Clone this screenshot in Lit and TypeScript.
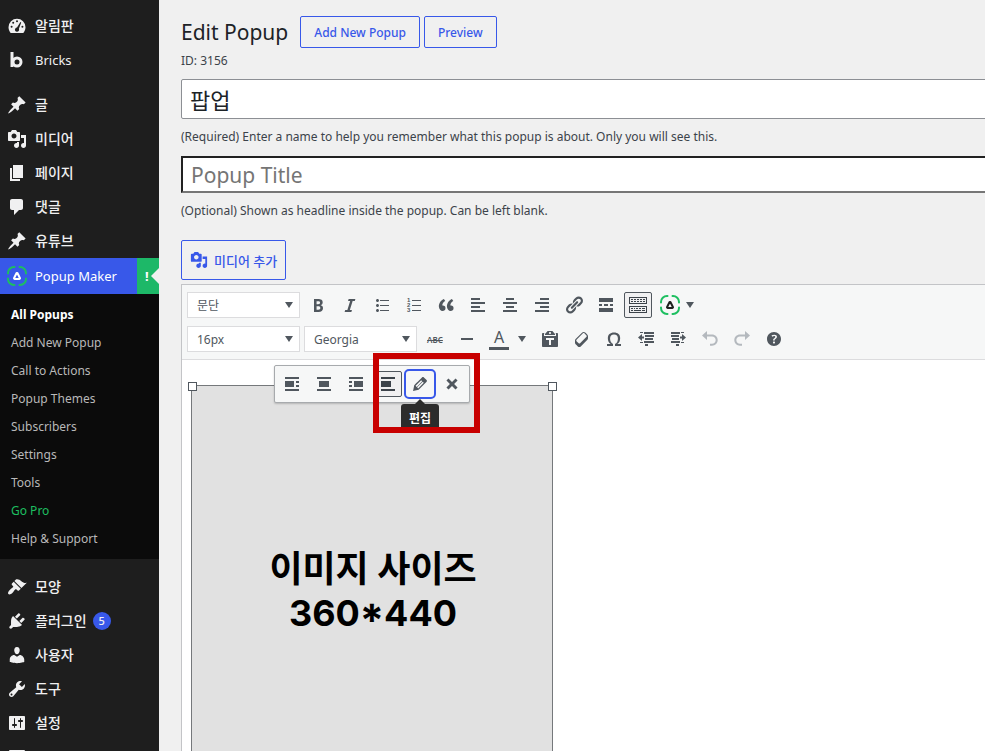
import { LitElement, html, css, svg, nothing } from "lit";
import { customElement, property } from "lit/decorators.js";
import { classMap } from "lit/directives/class-map.js";

const paths: Record<string, string> = {
  dashboard:
    "M3.76 17h12.48C17.4 15.6 18.5 13.500 18.500 11.200a8.500 8.500 0 1 0-17 0c0 2.300 1.100 4.400 2.260 5.800zM10 4.200a1 1 0 1 1 0 2 1 1 0 0 1 0-2zM6.200 5.800a1 1 0 1 1 0 2 1 1 0 0 1 0-2zM4.600 9.800a1 1 0 1 1 0 2 1 1 0 0 1 0-2zM15.400 9.800a1 1 0 1 1 0 2 1 1 0 0 1 0-2zM13.400 6l.8.500-2.300 6.200c.7 1.500-.3 3-1.900 3s-2.600-1.700-1.800-3c.4-.7 1.100-1 1.800-1.100z",
  pin: "M10.44 3.02l1.82-1.82 6.36 6.35-1.83 1.82c-1.05-.68-2.48-.57-3.41.36l-.75.75c-.92.93-1.04 2.35-.35 3.41l-1.83 1.82-2.41-2.41-2.8 2.79c-.42.42-3.38 2.71-3.8 2.29s1.86-3.39 2.28-3.81l2.79-2.79L4.1 9.36l1.83-1.82c1.05.69 2.48.57 3.4-.36l.75-.75c.93-.92 1.05-2.35.36-3.41z",
  media:
    "M13 11V4c0-.55-.45-1-1-1h-1.67L9 1H5L3.67 3H2c-.55 0-1 .45-1 1v7c0 .55.45 1 1 1h10c.55 0 1-.45 1-1zM7 4.5c1.38 0 2.5 1.12 2.5 2.5S8.38 9.5 7 9.5 4.5 8.38 4.5 7 5.62 4.5 7 4.5zM14 6h5v10.5c0 1.38-1.12 2.5-2.5 2.5S14 17.88 14 16.5s1.12-2.5 2.5-2.5c.17 0 .34.02.5.05V9h-3V6zm-4 8.05V13h2v3.5c0 1.38-1.12 2.5-2.5 2.5S7 17.88 7 16.5 8.12 14 9.5 14c.17 0 .34.02.5.05z",
  page: "M6 15V2h10v13H6zm-1 1h8v2H3V5h2v11z",
  comments: "M5 2h9c1.1 0 2 .9 2 2v7c0 1.1-.9 2-2 2h-2l-5 5v-5H5c-1.1 0-2-.9-2-2V4c0-1.1.9-2 2-2z",
  appearance:
    "M14.48 11.06L7.41 3.99l1.5-1.5c.5-.56 2.3-.47 3.51.32 1.21.8 1.43 1.28 2.91 2.1 1.18.64 2.45 1.26 4.45.85zm-.71.71L6.7 4.7 4.93 6.47c-.39.39-.39 1.02 0 1.41l1.06 1.06c.39.39.39 1.03 0 1.42-.6.6-1.43 1.11-2.21 1.69-.35.26-.7.53-1.01.84C1.43 14.23.4 16.08 1.4 17.07c.99 1 2.84-.03 4.18-1.36.31-.31.58-.66.85-1.02.57-.78 1.08-1.61 1.69-2.21.39-.39 1.02-.39 1.41 0l1.06 1.06c.39.39 1.02.39 1.41 0z",
  plugins:
    "M13.11 4.36L9.87 7.6 8 5.73l3.24-3.24c.35-.34 1.05-.2 1.56.32.52.51.66 1.21.31 1.55zm-8 1.77l.91-1.12 9.01 9.01-1.19.84c-.71.71-2.63 1.16-3.82 1.16H6.14L4.9 17.26c-.59.59-1.54.59-2.12 0-.59-.58-.59-1.53 0-2.12l1.24-1.24v-3.88c0-1.13.4-3.19 1.09-3.89zm7.26 3.97l3.24-3.24c.34-.35 1.04-.21 1.55.31.52.51.66 1.21.31 1.55l-3.24 3.25z",
  users:
    "M10 9.25c-2.27 0-2.73-3.44-2.73-3.44C7 4.02 7.82 2 9.97 2c2.16 0 2.98 2.02 2.71 3.81 0 0-.41 3.44-2.68 3.44zm0 2.57L12.72 10c2.39 0 4.52 2.33 4.52 4.53v2.49s-3.65 1.13-7.24 1.13c-3.65 0-7.24-1.13-7.24-1.13v-2.49c0-2.25 1.94-4.48 4.47-4.48z",
  tools:
    "M16.68 9.77c-1.34 1.34-3.3 1.67-4.95.99l-5.41 6.52c-.99.99-2.59.99-3.58 0s-.99-2.59 0-3.57l6.52-5.42c-.68-1.65-.35-3.61.99-4.95 1.28-1.28 3.12-1.62 4.72-1.06l-2.89 2.89 2.82 2.82 2.86-2.87c.53 1.58.18 3.39-1.08 4.65zM3.81 16.21c.4.39 1.04.39 1.43 0 .4-.4.4-1.04 0-1.43-.39-.4-1.03-.4-1.43 0-.39.39-.39 1.03 0 1.43z",
  settings:
    "M18 16V4c0-.55-.45-1-1-1H3c-.55 0-1 .45-1 1v12c0 .55.45 1 1 1h14c.55 0 1-.45 1-1zM8 11h1c.55 0 1 .45 1 1s-.45 1-1 1H8v1.5c0 .28-.22.5-.5.5s-.5-.22-.5-.5V13H6c-.55 0-1-.45-1-1s.45-1 1-1h1V5.5c0-.28.22-.5.5-.5s.5.22.5.5V11zm5-2h-1c-.55 0-1-.45-1-1s.45-1 1-1h1V5.5c0-.28.22-.5.5-.5s.5.22.5.5V7h1c.55 0 1 .45 1 1s-.45 1-1 1h-1v5.5c0 .28-.22.5-.5.5s-.5-.22-.5-.5V9z",
  more: "M3 3h14a1 1 0 0 1 1 1v13H2V4a1 1 0 0 1 1-1z",
  bold: "M6 4v13h4.54c1.37 0 2.46-.33 3.26-1 .8-.66 1.2-1.58 1.2-2.77 0-.84-.17-1.51-.51-2.01s-.9-.85-1.67-1.03v-.09c.57-.1 1.02-.4 1.36-.9s.51-1.13.51-1.91c0-1.14-.39-1.98-1.17-2.5C12.75 4.26 11.5 4 9.78 4H6zm2.57 5.15V6.26h1.36c.73 0 1.27.11 1.61.32.34.22.51.58.51 1.07 0 .54-.16.92-.47 1.15s-.82.35-1.51.35h-1.5zm0 2.19h1.6c1.44 0 2.16.53 2.16 1.61 0 .6-.17 1.05-.51 1.34s-.86.43-1.57.43H8.57v-3.38z",
  italic: "M14.78 6h-2.13l-2.8 9h2.12l-.62 2H4.6l.62-2h2.14l2.8-9H8.03l.62-2h6.75z",
  ul: "M5.5 7C4.67 7 4 6.33 4 5.5 4 4.68 4.67 4 5.5 4 6.32 4 7 4.68 7 5.5 7 6.33 6.32 7 5.5 7zM8 5h9v1H8V5zm-2.5 7c-.83 0-1.5-.67-1.5-1.5C4 9.68 4.67 9 5.5 9c.82 0 1.5.68 1.5 1.5 0 .83-.68 1.5-1.5 1.5zM8 10h9v1H8v-1zm-2.5 7c-.83 0-1.5-.67-1.5-1.5 0-.82.67-1.5 1.5-1.5.82 0 1.5.68 1.5 1.5 0 .83-.68 1.5-1.5 1.5zM8 15h9v1H8v-1z",
  quote:
    "M9.49 13.22c0-.74-.2-1.38-.61-1.9-.62-.78-1.83-.88-2.53-.72-.29-1.65 1.11-3.75 2.92-4.65L7.88 4c-2.73 1.3-5.42 4.28-4.96 8.05C3.21 14.43 4.59 16 6.54 16c.85 0 1.56-.25 2.12-.75s.83-1.18.83-2.03zm8.05 0c0-.74-.2-1.38-.61-1.9-.63-.78-1.83-.88-2.53-.72-.29-1.65 1.11-3.75 2.92-4.65L15.93 4c-2.73 1.3-5.41 4.28-4.95 8.05.28 2.38 1.66 3.95 3.61 3.95.85 0 1.56-.25 2.12-.75s.83-1.18.83-2.03z",
  alignleft: "M12 5V3H3v2h9zm5 4V7H3v2h14zm-5 4v-2H3v2h9zm5 4v-2H3v2h14z",
  aligncenter: "M14 5V3H6v2h8zm3 4V7H3v2h14zm-3 4v-2H6v2h8zm3 4v-2H3v2h14z",
  alignright: "M17 5V3H8v2h9zm0 4V7H3v2h14zm0 4v-2H8v2h9zm0 4v-2H3v2h14z",
  link: "M17.74 2.76c1.68 1.69 1.68 4.41 0 6.1l-1.53 1.52c-1.12 1.12-2.7 1.47-4.14 1.09l2.62-2.61.76-.77.76-.76c.84-.84.84-2.2 0-3.04-.84-.85-2.2-.85-3.04 0l-.77.76-3.38 3.38c-.37-1.44-.02-3.02 1.1-4.14l1.52-1.53c1.69-1.68 4.42-1.68 6.1 0zM8.59 13.43l5.34-5.34c.42-.42.42-1.1 0-1.52-.44-.43-1.13-.39-1.53 0l-5.33 5.34c-.42.42-.42 1.1 0 1.52.44.43 1.13.39 1.52 0zm-.76 2.29l4.14-4.15c.38 1.44.03 3.02-1.09 4.14l-1.52 1.53c-1.69 1.68-4.41 1.68-6.1 0-1.68-1.68-1.68-4.42 0-6.1l1.53-1.52c1.12-1.12 2.7-1.47 4.14-1.1l-4.14 4.15c-.85.84-.85 2.2 0 3.05.84.84 2.2.84 3.04 0z",
  insertmore: "M17 7V3H3v4h14zM6 11V9H3v2h3zm6 0V9H8v2h4zm5 0V9h-3v2h3zm0 6v-4H3v4h14z",
  keyboard:
    "M1 2h18v7H1V2zm1 1v5h16V3H2zm1 1h2v1H3V4zm3 0h2v1H6V4zm3 0h2v1H9V4zm3 0h2v1h-2V4zm3 0h2v1h-2V4zM3 6h2v1H3V6zm3 0h2v1H6V6zm3 0h2v1H9V6zm3 0h2v1h-2V6zm3 0h2v1h-2V6zM1 11h18v7H1v-7zm1 1v5h16v-5H2zm1 1h2v1H3v-1zm3 0h1v1H6v-1zm2 0h2v1H8v-1zm3 0h2v1h-2v-1zm3 0h3v1h-3v-1zM3 15h2v1H3v-1zm3 0h7v1H6v-1zm8 0h3v1h-3v-1z",
  minus: "M4 9h12v2H4V9z",
  paste:
    "M12.38 2L15 5v1H5V5l2.64-3h4.74zM10 5c.55 0 1-.44 1-1 0-.55-.45-1-1-1s-1 .45-1 1c0 .56.45 1 1 1zm5.45-1H17c.55 0 1 .45 1 1v12c0 .56-.45 1-1 1H3c-.55 0-1-.44-1-1V5c0-.55.45-1 1-1h1.55L4 4.63V7h12V4.63zM14 11V9H6v2h3v5h2v-5h3z",
  eraser:
    "M14.29 4.59l1.1 1.11c.41.4.61.94.61 1.47v2.12c0 .53-.2 1.07-.61 1.47l-6.63 6.63c-.4.41-.94.61-1.47.61s-1.07-.2-1.47-.61l-1.11-1.1-1.1-1.11c-.41-.4-.61-.94-.61-1.47v-2.12c0-.54.2-1.07.61-1.48l6.63-6.62c.4-.41.94-.61 1.47-.61s1.06.2 1.47.61zm-6.21 9.7l6.42-6.42c.39-.39.39-1.03 0-1.43L12.36 4.3c-.19-.19-.45-.29-.72-.29s-.52.1-.71.29l-6.42 6.42c-.39.4-.39 1.04 0 1.43l2.14 2.14c.38.38 1.04.38 1.43 0z",
  omega:
    "M10 5.4c1.27 0 2.24.36 2.91 1.08.66.71 1 1.76 1 3.13 0 1.28-.23 2.37-.69 3.27-.47.89-1.27 1.52-2.22 2.12v2h6v-2h-3.69c.92-.64 1.62-1.34 2.12-2.34.49-1.01.74-2.13.74-3.35 0-1.78-.55-3.19-1.65-4.22S11.92 3.54 10 3.54s-3.43.53-4.52 1.57c-1.1 1.04-1.65 2.44-1.65 4.2 0 1.21.24 2.31.73 3.33.48 1.01 1.19 1.71 2.1 2.36H3v2h6v-2c-.98-.64-1.8-1.28-2.24-2.17-.45-.89-.67-1.96-.67-3.22 0-1.37.33-2.41 1-3.13C7.75 5.76 8.72 5.4 10 5.4z",
  outdent:
    "M4 3h3v1H4zM8 3h10v2H8zM9 6h9v2H9zM9 9h8v2H9zM8 12h10v2H8zM4 13h3v1H4zM9 15h3v2H9zM2 8.500L6 5v2.500h2v2H6V12z",
  indent:
    "M16 3h-3v1h3zM12 3H3v2h9zM11 6H3v2h8zM11 9H4v2h7zM12 12H3v2h9zM16 13h-3v1h3zM8 15h3v2H8zM18 8.500L14 5v2.500h-2v2h2V12z",
  undo: "M7 2L2 6.500 7 11V7.500h5c2 0 3.700 1.500 3.700 3.600s-1.700 3.700-3.700 3.700h-2v2h2c3.200 0 5.700-2.500 5.700-5.700S15.200 5.500 12 5.500H7z",
  redo: "M13 2l5 4.500-5 4.500V7.500H8c-2 0-3.700 1.500-3.700 3.600s1.700 3.700 3.700 3.700h2v2H8c-3.200 0-5.700-2.500-5.700-5.700S4.800 5.500 8 5.500h5z",
  help: "M17 10c0-3.87-3.14-7-7-7-3.87 0-7 3.13-7 7s3.13 7 7 7c3.86 0 7-3.13 7-7zm-6.3 1.48H9.14v-.43c0-.38.08-.7.24-.98s.46-.57.88-.89c.41-.29.68-.53.81-.71.14-.18.2-.39.2-.62 0-.25-.09-.44-.28-.58-.19-.13-.45-.19-.79-.19-.58 0-1.25.19-2 .57l-.64-1.28c.87-.49 1.8-.74 2.77-.74.81 0 1.45.2 1.92.58.48.39.71.91.71 1.55 0 .43-.09.8-.29 1.11-.19.32-.57.67-1.11 1.06-.38.28-.61.49-.71.63-.1.15-.15.34-.15.57v.35zm-1.47 2.74c-.18-.17-.27-.42-.27-.73 0-.33.08-.58.26-.75s.43-.25.77-.25c.32 0 .57.09.75.26s.27.42.27.74c0 .3-.09.55-.27.72-.18.18-.43.27-.75.27-.33 0-.58-.09-.76-.26z",
  imgleft: "M3 5h14V3H3v2zm9 8V7H3v6h9zm2-4h3V7h-3v2zm0 4h3v-2h-3v2zM3 17h14v-2H3v2z",
  imgcenter: "M3 5h14V3H3v2zm12 8V7H5v6h10zM3 17h14v-2H3v2z",
  imgright: "M3 5h14V3H3v2zm0 4h3V7H3v2zm14 4V7H8v6h9zM3 13h3v-2H3v2zm0 4h14v-2H3v2z",
  imgnone: "M3 5h14V3H3v2zm10 8V7H3v6h10zM3 17h14v-2H3v2z",
  edit: "M13.89 3.39l2.71 2.72c.46.46.42 1.24.03 1.64l-8.01 8.02-5.56 1.16 1.16-5.58s7.6-7.63 7.99-8.03c.39-.39 1.22-.39 1.68.07zm-2.73 2.79l-5.59 5.61 1.11 1.11 5.54-5.65zm-2.97 8.23l5.58-5.6-1.07-1.08-5.59 5.6z",
  remove:
    "M15.550 6.500L12.100 10l3.450 3.500-2.050 2.050L10 12.100l-3.500 3.450-2.050-2.050L7.900 10 4.450 6.500 6.500 4.450 10 7.900l3.500-3.450z",
};

@customElement("ui-icon")
export class UiIcon extends LitElement {
  @property() name = "";

  static styles = css`
    :host {
      display: block;
      flex: none;
      width: 20px;
      height: 20px;
    }
    svg {
      display: block;
      width: 100%;
      height: 100%;
      fill: currentColor;
    }
    .ring {
      fill: none;
      stroke: #1dbf60;
      stroke-width: 2;
      stroke-linecap: round;
    }
    .mark {
      fill: none;
      stroke: currentColor;
      stroke-width: 2;
      stroke-linejoin: round;
    }
    .stem {
      fill: none;
      stroke: currentColor;
      stroke-width: 3;
    }
    .digit {
      font: 700 6px "Liberation Sans", sans-serif;
    }
  `;

  private shape() {
    if (this.name === "popup") {
      return svg`<path class="ring" d="M1 7.500V7a6 6 0 0 1 6-6h.5M12.500 1H13a6 6 0 0 1 6 6v.5M19 12.500V13a6 6 0 0 1-6 6h-.5M7.500 19H7a6 6 0 0 1-6-6v-.5"/>
        <path class="mark" d="M9.600 7h.8l2.600 5.300-.5.700h-5l-.5-.7z"/>`;
    }
    if (this.name === "bricks") {
      return svg`<path class="stem" d="M5 2v15"/><circle class="stem" cx="10" cy="12" r="4"/>`;
    }
    if (this.name === "ol") {
      return svg`<path d="M8 5h9v1H8zM8 10h9v1H8zM8 15h9v1H8z"/>
        <text class="digit" x="3" y="7">1</text><text class="digit" x="3" y="12">2</text><text class="digit" x="3" y="17">3</text>`;
    }
    return svg`<path fill-rule="evenodd" d=${paths[this.name] ?? ""}/>`;
  }

  render() {
    return html`<svg viewBox="0 0 20 20" aria-hidden="true">${this.shape()}</svg>`;
  }
}

interface MenuEntry {
  icon: string;
  label: string;
  latin?: boolean;
  count?: number;
  current?: boolean;
}

@customElement("admin-menu")
export class AdminMenu extends LitElement {
  static styles = css`
    :host {
      display: block;
      padding-top: 9px;
      background: #1e1e1e;
      color: #f0f0f1;
      font-family: "Noto Sans", "Noto Sans CJK KR", sans-serif;
    }
    ul {
      margin: 0;
      padding: 0;
      list-style: none;
    }
    .group {
      margin-bottom: 11px;
    }
    .item {
      display: flex;
      align-items: center;
      gap: 8px;
      height: 34px;
      padding-left: 7px;
      color: inherit;
      font-size: 14px;
      font-weight: 500;
      text-decoration: none;
    }
    .latin {
      font-size: 13px;
      font-weight: 400;
    }
    .current {
      height: 36px;
      background: #3858e9;
      color: #fff;
    }
    .badge {
      display: grid;
      place-items: center;
      width: 18px;
      height: 18px;
      margin-left: -2px;
      border-radius: 9px;
      background: #3858e9;
      font-size: 11px;
    }
    .alert {
      display: flex;
      align-items: center;
      justify-content: space-between;
      align-self: stretch;
      width: 14px;
      margin-left: auto;
      padding-left: 8px;
      background: #1db868;
      font-weight: 700;
    }
    .notch {
      border: 8px solid transparent;
      border-left-width: 0;
      border-right-color: #f0f0f0;
    }
    .sub {
      margin-bottom: 11px;
      padding: 7px 0 6px;
      background: #0b0b0b;
    }
    .link {
      display: flex;
      align-items: center;
      height: 28px;
      padding-left: 11px;
      color: #b9b9b9;
      font-size: 12px;
      text-decoration: none;
    }
    .active {
      color: #fff;
      font-weight: 700;
    }
    .pro {
      color: #1dbf60;
    }
  `;

  private groups: MenuEntry[][] = [
    [
      { icon: "dashboard", label: "알림판" },
      { icon: "bricks", label: "Bricks", latin: true },
    ],
    [
      { icon: "pin", label: "글" },
      { icon: "media", label: "미디어" },
      { icon: "page", label: "페이지" },
      { icon: "comments", label: "댓글" },
      { icon: "pin", label: "유튜브" },
      { icon: "popup", label: "Popup Maker", latin: true, current: true },
    ],
    [
      { icon: "appearance", label: "모양" },
      { icon: "plugins", label: "플러그인", count: 5 },
      { icon: "users", label: "사용자" },
      { icon: "tools", label: "도구" },
      { icon: "settings", label: "설정" },
      { icon: "more", label: "" },
    ],
  ];

  private links = [
    "All Popups",
    "Add New Popup",
    "Call to Actions",
    "Popup Themes",
    "Subscribers",
    "Settings",
    "Tools",
    "Go Pro",
    "Help & Support",
  ];

  private entry(e: MenuEntry) {
    return html`<li>
      <a href="#" class=${classMap({ item: true, latin: !!e.latin, current: !!e.current })}>
        <ui-icon name=${e.icon}></ui-icon>
        <span>${e.label}</span>
        ${e.count ? html`<span class="badge">${e.count}</span>` : nothing}
        ${e.current ? html`<span class="alert">!<i class="notch"></i></span>` : nothing}
      </a>
    </li>`;
  }

  render() {
    const [top, content, site] = this.groups;
    return html`
      <ul class="group">${top.map((e) => this.entry(e))}</ul>
      <ul>${content.map((e) => this.entry(e))}</ul>
      <ul class="sub">
        ${this.links.map(
          (l, i) => html`<li>
            <a href="#" class=${classMap({ link: true, active: i === 0, pro: l === "Go Pro" })}>${l}</a>
          </li>`
        )}
      </ul>
      <ul>${site.map((e) => this.entry(e))}</ul>
    `;
  }
}

@customElement("rich-editor")
export class RichEditor extends LitElement {
  static styles = css`
    :host {
      display: flex;
      flex-direction: column;
      border: 1px solid #c3c4c7;
      background: #fff;
      color: #50575e;
      font-family: "Noto Sans", "Noto Sans CJK KR", sans-serif;
    }
    .bars {
      display: grid;
      gap: 4px;
      padding: 5px 3px 5px;
      border-bottom: 1px solid #dcdcde;
      background: #f6f7f7;
    }
    .row {
      display: flex;
      align-items: center;
      height: 30px;
    }
    .pick {
      position: relative;
      display: block;
      margin: 0 2px;
    }
    select {
      display: block;
      width: 113px;
      height: 26px;
      padding: 0 9px;
      appearance: none;
      border: 1px solid #dcdcde;
      border-radius: 0;
      background: #fff;
      color: #50575e;
      font: 12px "Noto Sans", "Noto Sans CJK KR", sans-serif;
    }
    .caret {
      width: 0;
      height: 0;
      border: 4px solid transparent;
      border-top: 6px solid #50575e;
      border-bottom-width: 0;
    }
    .pick .caret {
      position: absolute;
      top: 10px;
      right: 7px;
    }
    button {
      display: grid;
      flex: none;
      place-items: center;
      box-sizing: border-box;
      width: 28px;
      height: 26px;
      margin: 0 2px;
      padding: 0;
      border: 1px solid transparent;
      border-radius: 2px;
      background: none;
      color: #50575e;
      font: 16px "Noto Sans", sans-serif;
    }
    .on {
      border-color: #50575e;
      background: #f0f0f1;
      color: #3c434a;
    }
    .off {
      color: #b4b9be;
    }
    .split {
      width: 47px;
      grid-template-columns: 26px 10px;
      justify-content: start;
      column-gap: 5px;
    }
    .brand {
      column-gap: 2px;
      color: #1e1e1e;
    }
    .strike {
      font-size: 8px;
      font-weight: 600;
      text-decoration: line-through;
    }
    .ink {
      width: 20px;
      height: 18px;
      border-bottom: 3px solid #50575e;
      font-size: 16px;
      line-height: 17px;
      text-align: center;
    }
    .canvas {
      position: relative;
      flex: 1;
      padding: 25px 9px 0;
    }
    .picture {
      position: relative;
      display: flex;
      flex-direction: column;
      align-items: center;
      justify-content: center;
      box-sizing: border-box;
      width: 362px;
      height: 442px;
      padding: 0 0 30px 2px;
      border: 1px solid #75787b;
      background: #e1e1e1;
      color: #000;
      font: 700 36px/44px Inter, "Noto Sans CJK KR", sans-serif;
    }
    .handle {
      position: absolute;
      top: -4px;
      width: 7px;
      height: 7px;
      border: 1px solid #50575e;
      background: #fff;
    }
    .start {
      left: -4px;
    }
    .end {
      right: -5px;
    }
    .tools {
      position: absolute;
      top: 5px;
      left: 92px;
      display: flex;
      padding: 5px 1px;
      border: 1px solid #a7aaad;
      border-radius: 2px;
      background: #f6f7f7;
      box-shadow: 0 1px 2px rgba(0, 0, 0, 0.2);
    }
    .focus {
      outline: 2px solid #3858e9;
      border-radius: 3px;
    }
    .tip {
      position: absolute;
      top: 38px;
      left: 126px;
      width: 38px;
      height: 28px;
      border-radius: 3px;
      background: #2c2c2c;
      color: #fff;
      font-size: 12px;
      font-weight: 700;
      line-height: 30px;
      text-align: center;
    }
    .tip::before {
      content: "";
      position: absolute;
      top: -5px;
      left: 14px;
      border: 5px solid transparent;
      border-top-width: 0;
      border-bottom-color: #2c2c2c;
    }
    .mark {
      position: absolute;
      top: -13px;
      left: 98px;
      width: 95px;
      height: 68px;
      border: 6px solid #c80000;
    }
  `;

  private button(name: string, cls = "") {
    return html`<button class=${cls} type="button" aria-label=${name}><ui-icon name=${name}></ui-icon></button>`;
  }

  private pick(label: string, value: string) {
    return html`<label class="pick">
      <select aria-label=${label}><option>${value}</option></select><i class="caret"></i>
    </label>`;
  }

  render() {
    return html`
      <div class="bars">
        <div class="row">
          ${this.pick("Format", "문단")}
          ${["bold", "italic", "ul", "ol", "quote", "alignleft", "aligncenter", "alignright", "link", "insertmore"].map(
            (n) => this.button(n)
          )}
          ${this.button("keyboard", "on")}
          <button class="split brand" type="button" aria-label="Popup Maker">
            <ui-icon name="popup"></ui-icon><i class="caret"></i>
          </button>
        </div>
        <div class="row">
          ${this.pick("Font size", "16px")} ${this.pick("Font family", "Georgia")}
          <button class="strike" type="button">ABC</button>
          ${this.button("minus")}
          <button class="split" type="button" aria-label="Text color"><span class="ink">A</span><i class="caret"></i></button>
          ${["paste", "eraser", "omega", "outdent", "indent"].map((n) => this.button(n))}
          ${["undo", "redo"].map((n) => this.button(n, "off"))} ${this.button("help")}
        </div>
      </div>
      <div class="canvas">
        <div class="picture">
          <span>이미지 사이즈</span>
          <span>360*440</span>
          <i class="handle start"></i>
          <i class="handle end"></i>
        </div>
        <div class="tools">
          ${["imgleft", "imgcenter", "imgright"].map((n) => this.button(n))}
          ${this.button("imgnone", "on")} ${this.button("edit", "focus")} ${this.button("remove")}
          <span class="tip" role="tooltip">편집</span>
          <i class="mark"></i>
        </div>
      </div>
    `;
  }
}

@customElement("app-root")
export class AppRoot extends LitElement {
  static styles = css`
    :host {
      display: grid;
      grid-template-columns: 159px minmax(0, 1fr);
      height: 100vh;
      overflow: hidden;
      background: #f0f0f0;
      color: #3c434a;
      font: 12px/18px "Noto Sans", "Noto Sans CJK KR", sans-serif;
    }
    main {
      display: flex;
      flex-direction: column;
      margin-right: -20px;
      padding: 16px 0 0 22px;
    }
    .head {
      display: flex;
      align-items: center;
      gap: 4px;
      height: 32px;
    }
    h1 {
      margin: 0 8px 0 0;
      color: #1d2327;
      font-size: 21px;
      font-weight: 400;
      line-height: 32px;
    }
    .action {
      display: flex;
      align-items: center;
      box-sizing: border-box;
      height: 32px;
      padding: 0 13px;
      border: 1px solid #3858e9;
      border-radius: 2px;
      background: none;
      color: #3858e9;
      font: 500 12px "Noto Sans", "Noto Sans CJK KR", sans-serif;
      text-decoration: none;
    }
    p {
      margin: 0;
    }
    .id {
      margin: 4px 0 9px;
    }
    input {
      box-sizing: border-box;
      width: 100%;
      padding: 0 8px;
      background: #fff;
      color: #1d2327;
      font: 22px "Noto Sans", "Noto Sans CJK KR", sans-serif;
    }
    .name {
      height: 40px;
      border: 1px solid #8c8f94;
      border-radius: 2px;
    }
    .title {
      height: 37px;
      border: 2px inset #767676;
      font-size: 21px;
    }
    .title::placeholder {
      color: #757575;
    }
    .hint {
      display: block;
      margin: 9px 0 10px;
    }
    .last {
      margin-bottom: 20px;
    }
    .media {
      align-self: start;
      gap: 6px;
      height: 40px;
      margin-bottom: 4px;
      padding: 0 8px;
      font-size: 13px;
    }
    .media ui-icon {
      width: 18px;
      height: 18px;
    }
    rich-editor {
      flex: 1;
    }
  `;

  render() {
    return html`
      <admin-menu></admin-menu>
      <main>
        <div class="head">
          <h1>Edit Popup</h1>
          <a class="action" href="#">Add New Popup</a>
          <a class="action" href="#">Preview</a>
        </div>
        <p class="id">ID: 3156</p>
        <input class="name" id="name" value="팝업" />
        <label class="hint" for="name"
          >(Required) Enter a name to help you remember what this popup is about. Only you will see this.</label
        >
        <input class="title" id="title" placeholder="Popup Title" />
        <label class="hint last" for="title">(Optional) Shown as headline inside the popup. Can be left blank.</label>
        <button class="action media" type="button"><ui-icon name="media"></ui-icon>미디어 추가</button>
        <rich-editor></rich-editor>
      </main>
    `;
  }
}
